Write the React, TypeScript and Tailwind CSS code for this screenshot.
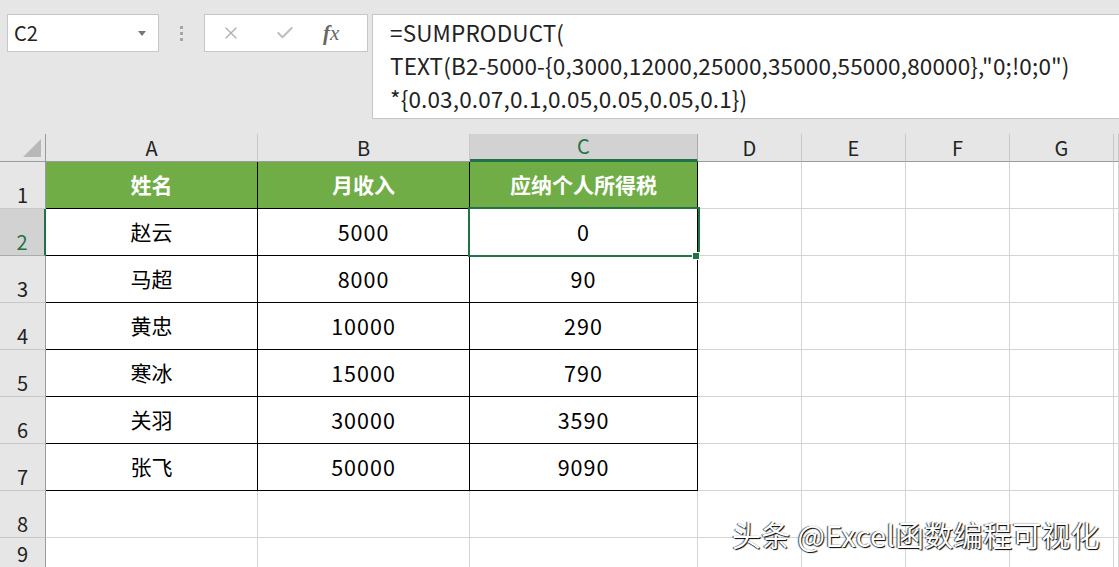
import { X, Check } from 'lucide-react'

const cols = ['A', 'B', 'C', 'D', 'E', 'F', 'G', '']
const rows = [
  ['姓名', '月收入', '应纳个人所得税'],
  ['赵云', '5000', '0'],
  ['马超', '8000', '90'],
  ['黄忠', '10000', '290'],
  ['寒冰', '15000', '790'],
  ['关羽', '30000', '3590'],
  ['张飞', '50000', '9090'],
  ['', '', ''],
  ['', '', ''],
]

const font = { fontFamily: '"Noto Sans CJK SC", "Noto Sans", sans-serif' }

export default function App() {
  return (
    <div className="w-[1119px] h-[567px] overflow-hidden bg-white" style={font}>
      {/* formula bar */}
      <div className="h-[134px] bg-[#e6e6e6] flex items-start pt-[14px]">
        <div className="ml-[7px] w-[152px] h-[38px] bg-white border border-[#c6c6c6] flex items-center justify-between pl-[6px] pr-[12px]">
          <span className="text-[20px] text-[#222] leading-none">C2</span>
          <span className="w-0 h-0 border-l-[4px] border-r-[4px] border-t-[5px] border-l-transparent border-r-transparent border-t-[#777]" />
        </div>
        <div className="w-[45px] h-[38px] flex flex-col items-center justify-center gap-[3px]">
          <span className="w-[3px] h-[3px] bg-[#a6a6a6]" />
          <span className="w-[3px] h-[3px] bg-[#a6a6a6]" />
          <span className="w-[3px] h-[3px] bg-[#a6a6a6]" />
        </div>
        <div className="w-[164px] h-[38px] bg-white border border-[#c6c6c6] flex items-center pl-[16px] gap-[34px]">
          <X size={20} strokeWidth={1.6} className="text-[#b0b0b0]" />
          <Check size={20} strokeWidth={2.6} className="text-[#c0c0c0]" />
          <span className="text-[21px] italic text-[#666] leading-none -ml-[6px]" style={{ fontFamily: '"Liberation Serif", serif' }}>
            <span className="font-bold">f</span>x
          </span>
        </div>
        <div className="ml-[4px] flex-1 h-[105px] bg-white border border-r-0 border-[#c6c6c6] pl-[17px] text-[22.5px] leading-[33px] text-[#222] tracking-[0.15px]">
          <div className="pt-[1px]">
            <div>=SUMPRODUCT(</div>
            <div>TEXT(B2-5000-{'{'}0,3000,12000,25000,35000,55000,80000{'}'},"0;!0;0")</div>
            <div>*{'{'}0.03,0.07,0.1,0.05,0.05,0.05,0.1{'}'})</div>
          </div>
        </div>
      </div>

      {/* sheet */}
      <div className="relative grid grid-cols-[46px_212px_212px_228px_104px_104px_104px_104px_1fr] grid-rows-[28px_repeat(8,47px)_30px]">
        {/* column headers */}
        <div className="bg-[#e6e6e6] border-r border-b border-[#9b9b9b] flex items-end justify-end p-[4px]">
          <span className="w-0 h-0 border-l-[18px] border-b-[18px] border-l-transparent border-b-[#b8b8b8]" />
        </div>
        {cols.map((c, i) =>
          i === 2 ? (
            <div key={c} className="bg-[#d2d2d2] border-r border-[#ababab] border-b-[3px] border-b-[#217346] flex items-end justify-center text-[20px] text-[#217346] leading-[27px]">
              {c}
            </div>
          ) : (
            <div key={c + i} className="bg-[#e6e6e6] border-r border-[#c8c8c8] border-b border-b-[#9b9b9b] flex items-end justify-center text-[20px] text-[#222] leading-[27px]">
              {c}
            </div>
          )
        )}

        {rows.map((r, ri) => (
          <Row key={ri} index={ri} cells={r} />
        ))}

        {/* selection C2 */}
        <div className="absolute left-[468px] top-[73px] w-[232px] h-[50px] border-[2px] border-[#217346] pointer-events-none" />
        <div className="absolute left-[692px] top-[118px] w-[8px] h-[8px] bg-[#217346] border border-white" />

        {/* watermark */}
        <div
          className="absolute left-[732px] top-[379px] text-[29px] text-white tracking-[0.3px] whitespace-nowrap"
          style={{ textShadow: '1px 1px 1px #000, -1px 0 1px #444' }}
        >
          头条 @Excel函数编程可视化
        </div>
      </div>
    </div>
  )
}

function Row({ index, cells }: { index: number; cells: string[] }) {
  const isHead = index === 0
  const inTable = index <= 6
  const selected = index === 1
  return (
    <>
      <div
        className={
          selected
            ? 'bg-[#d2d2d2] border-r-[2px] border-r-[#217346] border-b border-b-[#ababab] flex items-end justify-center pb-[3px] text-[20px] text-[#217346] leading-none'
            : 'bg-[#e6e6e6] border-r border-r-[#9b9b9b] border-b border-b-[#c8c8c8] flex items-end justify-center pb-[3px] text-[20px] text-[#222] leading-none'
        }
      >
        {index + 1}
      </div>
      {cells.map((v, ci) => (
        <div
          key={ci}
          className={
            isHead
              ? 'bg-[#70ad47] border-r border-b border-black flex items-center justify-center text-[21px] font-bold text-white'
              : inTable
                ? ci === 0
                  ? 'bg-white border-r border-b border-black flex items-center justify-center text-[21px] text-black'
                  : 'bg-white border-r border-b border-black flex items-center justify-center text-[21.5px] tracking-[1px] text-black'
                : 'bg-white border-r border-b border-[#d4d4d4]'
          }
        >
          {v}
        </div>
      ))}
      {[0, 1, 2, 3, 4].map((k) => (
        <div key={'e' + k} className="bg-white border-r border-b border-[#d4d4d4]" />
      ))}
    </>
  )
}
